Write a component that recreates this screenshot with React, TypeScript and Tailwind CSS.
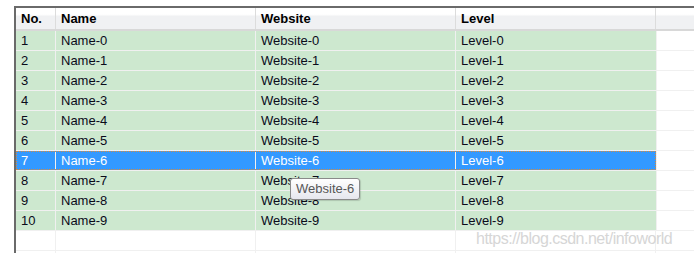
import React from 'react';

const rows = Array.from({ length: 10 }, (_, i) => ({
  no: i + 1,
  name: `Name-${i}`,
  website: `Website-${i}`,
  level: `Level-${i}`,
}));

const SELECTED = 6;

export default function App() {
  return (
    <div
      className="relative w-[694px] h-[253px] bg-white overflow-hidden pt-[6px] pl-[14px]"
      style={{ fontFamily: '"Liberation Sans", Arial, sans-serif' }}
    >
      <div className="h-full border-l-2 border-t-2 border-[#6a6a6a] bg-white">
        {/* Header */}
        <div className="flex h-[23px] border-b-2 border-[#d8d8d8] bg-gradient-to-b from-white from-30% to-[#f0f1f3] to-40% text-[13px] font-bold text-black">
          <div className="w-[40px] pl-[5px] flex items-center border-r border-[#dcdcdc]">No.</div>
          <div className="w-[200px] pl-[5px] flex items-center border-r border-[#dcdcdc]">Name</div>
          <div className="w-[200px] pl-[5px] flex items-center border-r border-[#dcdcdc]">Website</div>
          <div className="w-[200px] pl-[5px] flex items-center border-r border-[#dcdcdc]">Level</div>
          <div className="flex-1" />
        </div>

        {/* Rows */}
        {rows.map((r, i) => {
          const sel = i === SELECTED;
          return (
            <div key={r.no} className="flex h-[20px] border-b border-[#f0f0f0] text-[13px]">
              <div
                className={`flex w-[640px] ${
                  sel
                    ? 'bg-[#3399ff] text-white outline-1 outline-dotted outline-[#d98a3a] -outline-offset-1'
                    : 'bg-[#cde8cf] text-[#0a0a1a]'
                }`}
              >
                <div className="w-[40px] pl-[5px] flex items-center border-r border-[#f0f0f0]">{r.no}</div>
                <div className="w-[200px] pl-[5px] flex items-center border-r border-[#f0f0f0]">{r.name}</div>
                <div className="w-[200px] pl-[5px] flex items-center border-r border-[#f0f0f0]">{r.website}</div>
                <div className="w-[200px] pl-[5px] flex items-center">{r.level}</div>
              </div>
              <div className="flex-1 border-l border-[#f0f0f0]" />
            </div>
          );
        })}

        {/* Empty row */}
        <div className="flex h-[20px] border-b border-[#f0f0f0]">
          <div className="w-[40px] border-r border-[#f0f0f0]" />
          <div className="w-[200px] border-r border-[#f0f0f0]" />
          <div className="w-[200px] border-r border-[#f0f0f0]" />
          <div className="w-[200px] border-r border-[#f0f0f0]" />
          <div className="flex-1" />
        </div>
        <div className="flex h-[10px]">
          <div className="w-[40px] border-r border-[#f0f0f0]" />
          <div className="w-[200px] border-r border-[#f0f0f0]" />
          <div className="w-[200px] border-r border-[#f0f0f0]" />
          <div className="w-[200px] border-r border-[#f0f0f0]" />
        </div>
      </div>

      {/* Tooltip */}
      <div className="absolute left-[290px] top-[178px] h-[22px] px-[5px] flex items-center rounded-[3px] border border-[#8a8a8a] bg-gradient-to-b from-white to-[#e6e7ee] text-[13px] text-[#575757] shadow-[1px_1px_1px_rgba(0,0,0,0.15)]">
        Website-6
      </div>

      {/* Watermark */}
      <div className="absolute left-[476px] top-[227px] text-[16px] text-[#d6d6d6] tracking-[-0.5px]">
        https://blog.csdn.net/infoworld
      </div>
    </div>
  );
}
